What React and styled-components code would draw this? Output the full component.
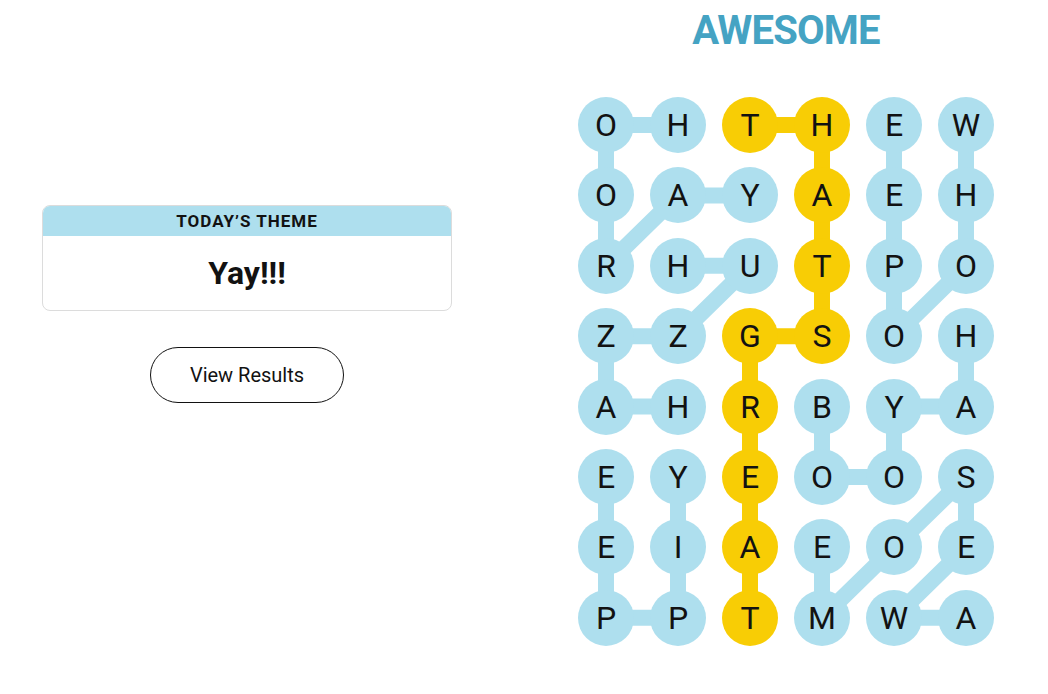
import React from "react";
import styled, { createGlobalStyle } from "styled-components";

const GlobalStyle = createGlobalStyle`
  html, body { margin: 0; padding: 0; background: #ffffff; }
  body { font-family: Roboto, "Liberation Sans", sans-serif; color: #121212; }
`;

const BLUE = "#aedfee";
const YELLOW = "#f8cd05";
const CELL = 56;
const COL_GAP = 16;
const ROW_GAP = 14.4;

const LETTERS = [
  "OHTHEW",
  "OAYAEH",
  "RHUTPO",
  "ZZGSOH",
  "AHRBYA",
  "EYEOOS",
  "EIAEOE",
  "PPTMWA",
];

const BLUE_PATHS = [
  [[0, 1], [0, 0], [1, 0], [2, 0], [1, 1], [1, 2]],
  [[0, 5], [1, 5], [2, 5], [3, 4], [2, 4], [1, 4], [0, 4]],
  [[2, 1], [2, 2], [3, 1], [3, 0], [4, 0], [4, 1]],
  [[4, 3], [5, 3], [5, 4], [4, 4], [4, 5], [3, 5]],
  [[5, 1], [6, 1], [7, 1], [7, 0], [6, 0], [5, 0]],
  [[7, 5], [7, 4], [6, 5], [5, 5], [6, 4], [7, 3], [6, 3]],
];
const SPANGRAM = [[0, 2], [0, 3], [1, 3], [2, 3], [3, 3], [3, 2], [4, 2], [5, 2], [6, 2], [7, 2]];

const yellowSet = new Set(SPANGRAM.map(([r, c]) => `${r}-${c}`));

const cx = (c) => CELL / 2 + c * (CELL + COL_GAP);
const cy = (r) => CELL / 2 + r * (CELL + ROW_GAP);
const GRID_W = 6 * CELL + 5 * COL_GAP;
const GRID_H = 8 * CELL + 7 * ROW_GAP;

const Page = styled.div`
  display: flex;
  flex-direction: row;
  align-items: flex-start;
  width: 1048px;
  height: 694px;
  box-sizing: border-box;
  padding-left: 42px;
`;

const LeftColumn = styled.div`
  width: 410px;
  padding-top: 205px;
  display: flex;
  flex-direction: column;
  align-items: center;
  gap: 36px;
`;

const ThemeCard = styled.div`
  width: 100%;
  box-sizing: border-box;
  border: 1px solid #dcdcdc;
  border-radius: 8px;
  overflow: hidden;
  background: #fff;
`;

const ThemeHeader = styled.div`
  background: ${BLUE};
  height: 30px;
  display: flex;
  align-items: center;
  justify-content: center;
  font-family: Roboto, "Liberation Sans", sans-serif;
  font-weight: 700;
  font-size: 17px;
  letter-spacing: 1px;
  text-transform: uppercase;
  color: #121212;
`;

const ThemeBody = styled.div`
  height: 74px;
  display: flex;
  align-items: center;
  justify-content: center;
  font-family: Roboto, "Liberation Sans", sans-serif;
  font-weight: 700;
  font-size: 32px;
  color: #121212;
`;

const ResultsButton = styled.button`
  width: 194px;
  height: 56px;
  border-radius: 28px;
  border: 1px solid #121212;
  background: #fff;
  font-family: Roboto, "Liberation Sans", sans-serif;
  font-size: 20px;
  font-weight: 400;
  color: #121212;
  cursor: pointer;
  padding: 0;
`;

const RightColumn = styled.div`
  margin-left: 126px;
  width: ${GRID_W}px;
  display: flex;
  flex-direction: column;
  align-items: center;
  padding-top: 7px;
`;

const Title = styled.h1`
  margin: 0;
  height: 48px;
  line-height: 48px;
  font-family: Roboto, "Liberation Sans", sans-serif;
  font-weight: 700;
  font-size: 40px;
  letter-spacing: -0.8px;
  color: #45a3c3;
`;

const Board = styled.div`
  position: relative;
  margin-top: 42px;
  display: grid;
  grid-template-columns: repeat(6, ${CELL}px);
  grid-auto-rows: ${CELL}px;
  column-gap: ${COL_GAP}px;
  row-gap: ${ROW_GAP}px;
`;

const Links = styled.svg`
  position: absolute;
  left: 0;
  top: 0;
  z-index: 0;
  pointer-events: none;
`;

const Letter = styled.div`
  position: relative;
  z-index: 1;
  width: ${CELL}px;
  height: ${CELL}px;
  border-radius: 50%;
  background: ${(p) => (p.$found ? YELLOW : BLUE)};
  display: flex;
  align-items: center;
  justify-content: center;
  font-family: Roboto, "Liberation Sans", sans-serif;
  font-size: 32px;
  font-weight: 400;
  color: #121212;
  user-select: none;
`;

const pathPoints = (path) => path.map(([r, c]) => `${cx(c)},${cy(r)}`).join(" ");

export default function App() {
  return (
    <>
      <GlobalStyle />
      <Page>
        <LeftColumn>
          <ThemeCard>
            <ThemeHeader>Today’s Theme</ThemeHeader>
            <ThemeBody>Yay!!!</ThemeBody>
          </ThemeCard>
          <ResultsButton>View Results</ResultsButton>
        </LeftColumn>
        <RightColumn>
          <Title>AWESOME</Title>
          <Board>
            <Links width={GRID_W} height={GRID_H} viewBox={`0 0 ${GRID_W} ${GRID_H}`}>
              {BLUE_PATHS.map((p, i) => (
                <polyline key={i} points={pathPoints(p)} fill="none" stroke={BLUE} strokeWidth="16" strokeLinejoin="round" />
              ))}
              <polyline points={pathPoints(SPANGRAM)} fill="none" stroke={YELLOW} strokeWidth="16" strokeLinejoin="round" />
            </Links>
            {LETTERS.map((row, r) =>
              row.split("").map((ch, c) => (
                <Letter key={`${r}-${c}`} $found={yellowSet.has(`${r}-${c}`)}>
                  {ch}
                </Letter>
              ))
            )}
          </Board>
        </RightColumn>
      </Page>
    </>
  );
}
